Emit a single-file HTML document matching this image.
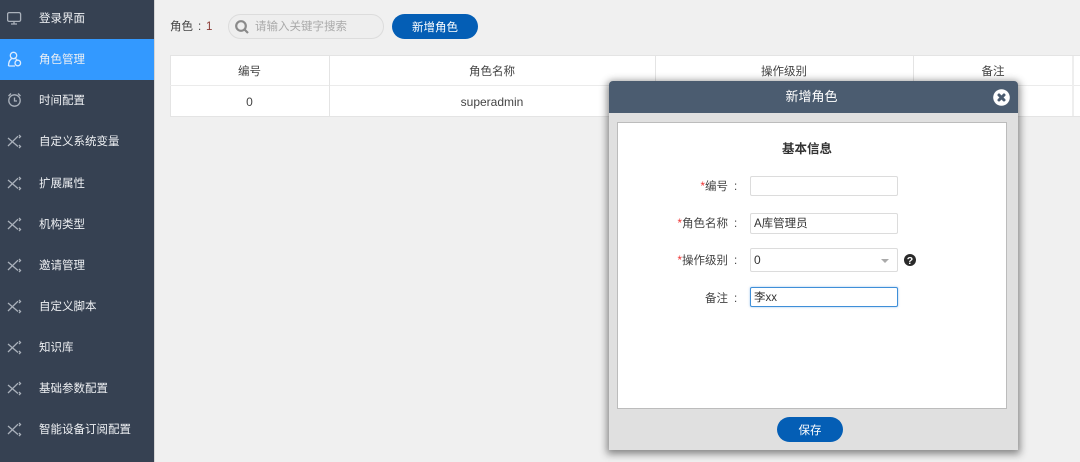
<!DOCTYPE html>
<html><head><meta charset="utf-8">
<style>
*{box-sizing:border-box}
html,body{margin:0;padding:0;width:1080px;height:462px;overflow:hidden;background:#f0f0f0;font-family:"Liberation Sans","Noto Sans CJK SC",sans-serif;font-size:11.5px;color:#444}
.a{position:absolute;white-space:nowrap}
#side{position:absolute;left:0;top:0;width:154px;height:462px;background:#364152}
.it{position:absolute;left:39px;color:#eef0f3;line-height:16px;font-size:11.5px}
.ic{position:absolute;left:7px;width:20px;height:20px;fill:none;stroke:#aab1bb;stroke-width:1.3}
.c{text-align:center}
.inp{position:absolute;left:750px;width:148px;background:#fff;border:1px solid #dcdcdc;border-radius:2px;padding-left:3px;color:#333;line-height:20px}
.lb{position:absolute;right:352px;color:#444;line-height:16px}
.lb i{color:#e33;font-style:normal}
.lb:after{content:":";position:absolute;left:100%;margin-left:6px}
</style></head><body>
<div id="side">
<div class="a" style="left:0;top:39px;width:154px;height:41px;background:#3399ff"></div>
<svg class="ic" style="top:8px" viewBox="0 0 20 20"><rect x="0.6" y="4.600" width="13" height="8.800" rx="1.500"/><path d="M7 13.500v2M4 16h6"/></svg>
<svg class="ic" style="top:49px;stroke:#dcecff" viewBox="0 0 20 20"><circle cx="6.500" cy="6.500" r="3.200"/><path d="M1.500 17c0-4 1-6.200 3.300-7.500M8.500 9.700c.8.400 1.300.8 1.700 1.400M1.500 17h6.500"/><circle cx="10.800" cy="14" r="2.800"/></svg>
<svg class="ic" style="top:90px" viewBox="0 0 20 20"><circle cx="7.500" cy="10.500" r="5.700"/><path d="M7.500 7.500v3.500h2.500M1.500 6l2.500-2.500M13.500 6L11 3.500"/></svg>
<div class="it" style="top:11px">登录界面</div>
<div class="it" style="top:52px">角色管理</div>
<div class="it" style="top:93px">时间配置</div>
<div class="it" style="top:134px">自定义系统变量</div>
<div class="it" style="top:176px">扩展属性</div>
<div class="it" style="top:217px">机构类型</div>
<div class="it" style="top:258px">邀请管理</div>
<div class="it" style="top:299px">自定义脚本</div>
<div class="it" style="top:340px">知识库</div>
<div class="it" style="top:381px">基础参数配置</div>
<div class="it" style="top:422px">智能设备订阅配置</div>
<svg class="ic" style="top:132px" viewBox="0 0 20 20"><path d="M1 6l10 8.500M1 14l10-9.800M12 3l1.500 1.500-1.500 1.500M12 13l1.500 1.500-1.500 1.500"/></svg>
<svg class="ic" style="top:174px" viewBox="0 0 20 20"><path d="M1 6l10 8.500M1 14l10-9.800M12 3l1.500 1.500-1.500 1.500M12 13l1.500 1.500-1.500 1.500"/></svg>
<svg class="ic" style="top:215px" viewBox="0 0 20 20"><path d="M1 6l10 8.500M1 14l10-9.800M12 3l1.500 1.500-1.500 1.500M12 13l1.500 1.500-1.500 1.500"/></svg>
<svg class="ic" style="top:256px" viewBox="0 0 20 20"><path d="M1 6l10 8.500M1 14l10-9.800M12 3l1.500 1.500-1.500 1.500M12 13l1.500 1.500-1.500 1.500"/></svg>
<svg class="ic" style="top:297px" viewBox="0 0 20 20"><path d="M1 6l10 8.500M1 14l10-9.800M12 3l1.500 1.500-1.500 1.500M12 13l1.500 1.500-1.500 1.500"/></svg>
<svg class="ic" style="top:338px" viewBox="0 0 20 20"><path d="M1 6l10 8.500M1 14l10-9.800M12 3l1.500 1.500-1.500 1.500M12 13l1.500 1.500-1.500 1.500"/></svg>
<svg class="ic" style="top:379px" viewBox="0 0 20 20"><path d="M1 6l10 8.500M1 14l10-9.800M12 3l1.500 1.500-1.500 1.500M12 13l1.500 1.500-1.500 1.500"/></svg>
<svg class="ic" style="top:420px" viewBox="0 0 20 20"><path d="M1 6l10 8.500M1 14l10-9.800M12 3l1.500 1.500-1.500 1.500M12 13l1.500 1.500-1.500 1.500"/></svg>
</div>
<div class="a" style="left:154px;top:0;width:1px;height:462px;background:#d4d4d4"></div>

<div class="a" style="left:170px;top:19px;line-height:16px;font-size:11.500px">角色</div>
<div class="a" style="left:198px;top:19px;line-height:16px;font-size:11.500px">:</div>
<div class="a" style="left:206px;top:19px;line-height:16px;font-size:11.500px;color:#8a3a34">1</div>
<div class="a" style="left:228px;top:14px;width:156px;height:25px;border:1px solid #dcdcdc;border-radius:13px;background:#eeeeee"></div>
<svg class="a" style="left:234px;top:19px" width="16" height="16" viewBox="0 0 16 16" fill="none" stroke="#8a8a8a" stroke-width="2.200"><circle cx="7" cy="7" r="4.800"/><path d="M10.500 10.500l3.500 3.500"/></svg>
<div class="a" style="left:255px;top:19px;color:#aaa;line-height:16px">请输入关键字搜索</div>
<div class="a c" style="left:392px;top:14px;width:86px;height:25px;border-radius:13px;background:#045eb5;color:#fff;line-height:28px">新增角色</div>

<div class="a" style="left:170px;top:55px;width:910px;height:62px;background:#fff;border-top:1px solid #e4e4e4;border-bottom:1px solid #e4e4e4;border-left:1px solid #e4e4e4"></div>
<div class="a" style="left:170px;top:85px;width:910px;height:1px;background:#ebebeb"></div>
<div class="a" style="left:329px;top:55px;width:1px;height:62px;background:#e4e4e4"></div>
<div class="a" style="left:655px;top:55px;width:1px;height:62px;background:#e4e4e4"></div>
<div class="a" style="left:913px;top:55px;width:1px;height:62px;background:#e4e4e4"></div>
<div class="a" style="left:1072px;top:56px;width:2px;height:60px;background:#eeeeee"></div>
<div class="a c" style="left:170px;top:64px;width:159px;line-height:16px">编号</div>
<div class="a c" style="left:329px;top:64px;width:326px;line-height:16px">角色名称</div>
<div class="a c" style="left:655px;top:64px;width:258px;line-height:16px">操作级别</div>
<div class="a c" style="left:913px;top:64px;width:160px;line-height:16px">备注</div>
<div class="a c" style="left:170px;top:94px;width:159px;line-height:16px;font-size:12px">0</div>
<div class="a c" style="left:329px;top:94px;width:326px;line-height:16px;font-size:12px">superadmin</div>

<div class="a" style="left:609px;top:81px;width:409px;height:369px;background:#e0e0e0;border-radius:4px 4px 0 0;box-shadow:0 2px 8px 2px rgba(0,0,0,.45)"></div>
<div class="a c" style="left:609px;top:81px;width:405px;height:32px;background:#4b5c70;border-radius:4px 4px 0 0;color:#fff;font-size:13px;line-height:32px">新增角色</div>
<div class="a" style="left:1010px;top:81px;width:8px;height:32px;background:#4b5c70;border-radius:0 4px 0 0"></div>
<svg class="a" style="left:993px;top:88.500px" width="17" height="17" viewBox="0 0 17 17"><circle cx="8.500" cy="8.500" r="8.300" fill="#fff"/><path d="M6 6l5 5M11 6l-5 5" stroke="#4b5c70" stroke-width="3" stroke-linecap="round"/></svg>
<div class="a" style="left:617px;top:122px;width:390px;height:287px;background:#fff;border:1px solid #bcbcbc"></div>
<div class="a c" style="left:617px;top:141px;width:380px;font-weight:bold;font-size:12.500px;color:#333;line-height:16px">基本信息</div>

<div class="lb" style="top:179px"><i>*</i>编号</div>
<div class="lb" style="top:216px"><i>*</i>角色名称</div>
<div class="lb" style="top:253px"><i>*</i>操作级别</div>
<div class="lb" style="top:291px">备注</div>
<div class="inp" style="top:176px;height:20px"></div>
<div class="inp" style="top:213px;height:21px">A库管理员</div>
<div class="inp" style="top:248px;height:24px;line-height:22px;font-size:12px">0</div>
<div class="a" style="left:881px;top:259px;width:0;height:0;border-left:4px solid transparent;border-right:4px solid transparent;border-top:4px solid #aaa"></div>
<svg class="a" style="left:904px;top:254px" width="12" height="12" viewBox="0 0 12 12"><circle cx="6" cy="6" r="6" fill="#2a2a2a"/><text x="6" y="9.800" font-size="10.500" font-weight="bold" fill="#fff" text-anchor="middle" font-family="Liberation Sans">?</text></svg>
<div class="inp" style="top:287px;height:20px;border-color:#3f8fd8;box-shadow:0 0 2px rgba(60,140,220,.5)">李xx</div>

<div class="a c" style="left:777px;top:417px;width:66px;height:25px;border-radius:13px;background:#045eb5;color:#fff;line-height:28px">保存</div>
</body></html>
